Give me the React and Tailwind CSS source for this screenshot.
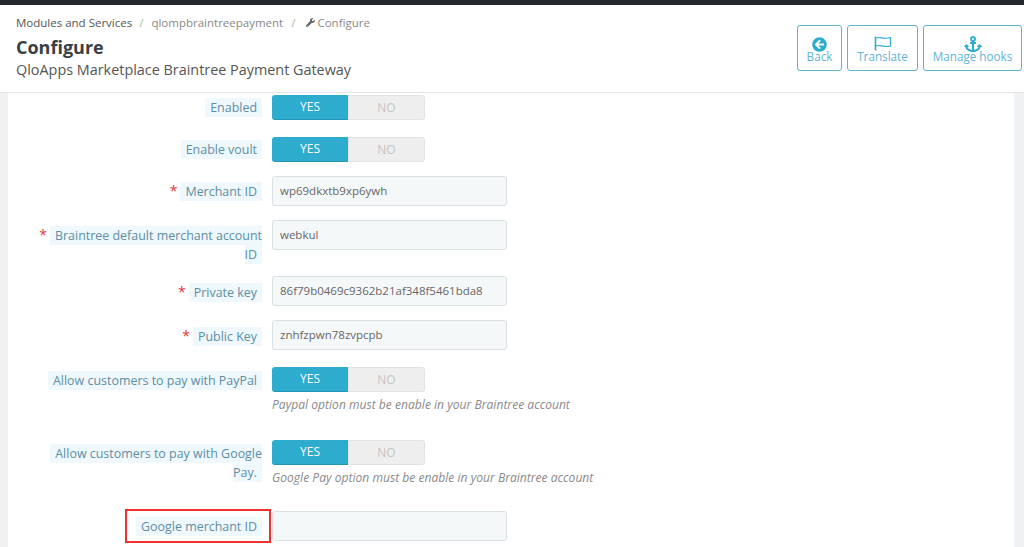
import { FaArrowCircleLeft, FaAnchor, FaWrench } from 'react-icons/fa'

function Label({ children, required, className = '' }) {
  return (
    <div className={`w-[254px] shrink-0 text-right text-[12.45px] leading-[18.5px] text-[#5d8ea3] ${className}`}>
      {required && <span className="text-[#e0383e] text-[14px] mr-[3px]">*</span>}
      <span className="bg-[#eff8fc] px-[5px] py-[1px]">{children}</span>
    </div>
  )
}

function Toggle() {
  return (
    <div className="flex w-[153px] h-[25px] rounded-[3px] text-[12px] leading-[23px] text-center">
      <div className="w-[76px] bg-[#2eacce] text-white rounded-l-[3px] border-b border-[#2596b5]">YES</div>
      <div className="w-[77px] bg-[#eeeeee] text-[#c4c4c4] rounded-r-[3px] border border-[#e2e2e2]">NO</div>
    </div>
  )
}

function Field({ value }) {
  return (
    <div className="w-[235px] h-[30px] px-[7px] bg-[#f5f8f9] border border-[#d9e1e4] rounded-[3px] text-[11.5px] leading-[28px] text-[#666]">
      {value}
    </div>
  )
}

function Hint({ children }) {
  return <p className="mt-[5px] text-[12.1px] leading-[16px] italic text-[#8a8a8a]">{children}</p>
}

function HeadButton({ icon, label, className }) {
  return (
    <button className={`relative h-[46px] border border-[#5eb5d2] rounded-[3px] bg-white text-[11.7px] text-[#5fb4d3] flex flex-col items-center ${className}`}>
      <span className="mt-[10px] text-[#2eacce] leading-none">{icon}</span>
      <span className="absolute top-[22px] leading-[17px] whitespace-nowrap">{label}</span>
    </button>
  )
}

function FlagIcon() {
  return (
    <svg viewBox="0 0 18 15" className="w-[18px] h-[15px]" fill="none" stroke="currentColor">
      <path d="M1.5 0.5V14.5" strokeWidth="1.6" />
      <path d="M2 2C6 0 9 4 16.5 1.5V10C10 12 6 8 2 10" strokeWidth="1.2" />
    </svg>
  )
}

export default function App() {
  return (
    <div className="w-[1024px] h-[547px] overflow-hidden bg-[#eff1f2] text-[#555] font-['Open_Sans',sans-serif]">
      <div className="h-[5px] bg-[#25282d]" />
      <header className="h-[88px] bg-white border-b border-[#e2e4e5] flex justify-between pl-[16px] pr-[2px]">
        <div>
          <nav className="mt-[9px] flex items-center text-[11.5px] leading-[17px] text-[#888]">
            <span className="text-[#555]">Modules and Services</span>
            <span className="ml-[7px] mr-[8px] text-[#a9bd8f]">/</span>
            <span>qlompbraintreepayment</span>
            <span className="ml-[8px] mr-[11px] text-[#a9bd8f]">/</span>
            <FaWrench className="w-[9px] h-[9px] mr-[2px] text-[#666]" />
            <span>Configure</span>
          </nav>
          <h1 className="mt-[3px] text-[18px] leading-[26px] font-bold text-[#3a3f44]">Configure</h1>
          <p className="text-[14.4px] leading-[20px] text-[#555]">QloApps Marketplace Braintree Payment Gateway</p>
        </div>
        <div className="flex gap-[5px] mt-[20px]">
          <HeadButton icon={<FaArrowCircleLeft className="w-[15px] h-[15px] mt-[1px]" />} label="Back" className="w-[45px] ml-[1px]" />
          <HeadButton icon={<FlagIcon />} label="Translate" className="w-[71px]" />
          <HeadButton icon={<FaAnchor className="w-[18px] h-[18px] -mt-[1px]" />} label="Manage hooks" className="w-[99px]" />
        </div>
      </header>

      <main className="ml-[8px] w-[1006px] h-[454px] bg-white pt-[2px]">
        <div className="flex gap-[10px]">
          <Label className="mt-[4px]">Enabled</Label>
          <Toggle />
        </div>
        <div className="flex gap-[10px] mt-[17px]">
          <Label className="mt-[4px]">Enable voult</Label>
          <Toggle />
        </div>
        <div className="flex gap-[10px] mt-[14px]">
          <Label required className="mt-[6px]">Merchant ID</Label>
          <Field value="wp69dkxtb9xp6ywh" />
        </div>
        <div className="flex gap-[10px] mt-[14px]">
          <Label required className="mt-[6px]">Braintree default merchant account<br />ID</Label>
          <Field value="webkul" />
        </div>
        <div className="flex gap-[10px] mt-[12px]">
          <Label required className="mt-[7px]">Private key</Label>
          <Field value="86f79b0469c9362b21af348f5461bda8" />
        </div>
        <div className="flex gap-[10px] mt-[14px]">
          <Label required className="mt-[7px]">Public Key</Label>
          <Field value="znhfzpwn78zvpcpb" />
        </div>
        <div className="flex gap-[10px] mt-[17px]">
          <Label className="mt-[5px]">Allow customers to pay with PayPal</Label>
          <div>
            <Toggle />
            <Hint>Paypal option must be enable in your Braintree account</Hint>
          </div>
        </div>
        <div className="flex gap-[10px] mt-[27px]">
          <Label className="mt-[5px]">Allow customers to pay with Google<br />Pay.</Label>
          <div>
            <Toggle />
            <Hint>Google Pay option must be enable in your Braintree account</Hint>
          </div>
        </div>
        <div className="relative flex gap-[10px] mt-[25px]">
          <Label className="mt-[7px]">Google merchant ID</Label>
          <Field value="" />
          <div className="absolute left-[117px] top-[-2px] w-[146px] h-[34px] border-2 border-[#f0312f]" />
        </div>
      </main>
    </div>
  )
}
